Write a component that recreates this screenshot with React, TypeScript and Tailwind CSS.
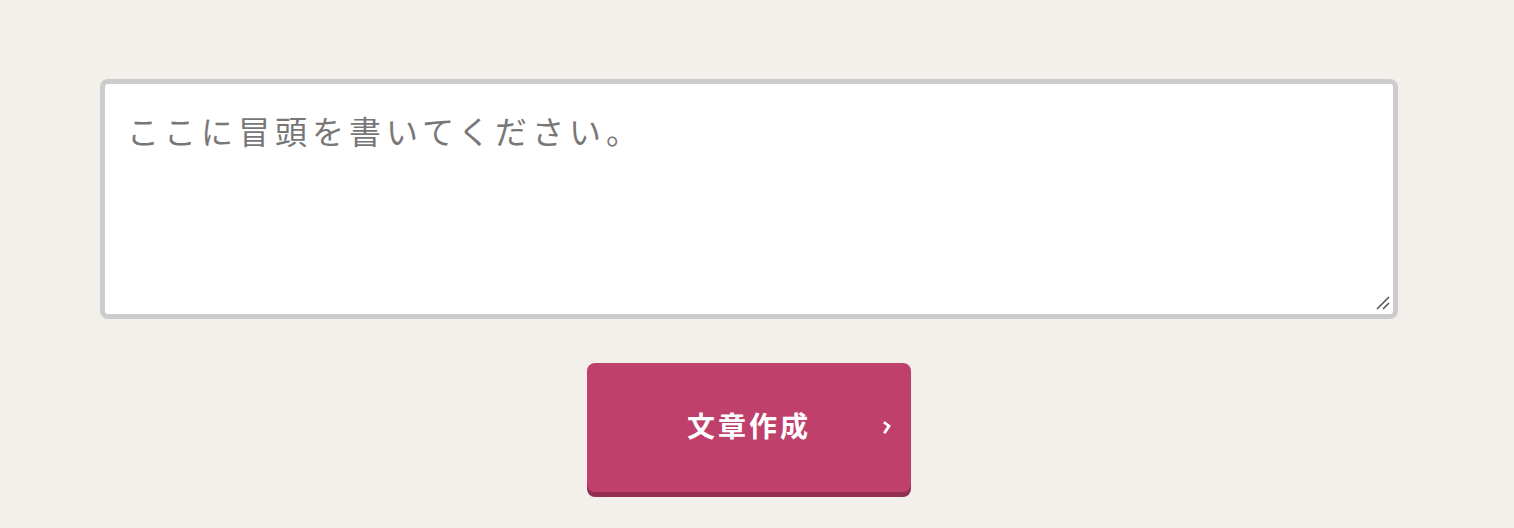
import React, { useState } from 'react';

export default function App() {
  const [text, setText] = useState('');

  return (
    <div className="min-h-[528px] w-full bg-[#f3f0eb] pt-[79px]" style={{ fontFamily: '"Noto Sans CJK JP", "Noto Sans", sans-serif' }}>
      <div className="ml-[100px] flex w-[1298px] flex-col items-center">
        <div className="relative w-full">
          <textarea
            value={text}
            onChange={(e) => setText(e.target.value)}
            placeholder="ここに冒頭を書いてください。"
            className="block h-[240px] w-full resize-none rounded-[8px] border-[5px] border-[#cccccc] bg-white px-[22px] py-[22px] text-[32px] leading-[1.5] tracking-[5px] text-[#333] outline-none placeholder:text-[#777777]"
          />
          {/* resize grip */}
          <svg className="pointer-events-none absolute bottom-[9px] right-[8px]" width="14" height="14" viewBox="0 0 14 14">
            <path d="M1 13 L13 1 M7 13 L13 7" stroke="#555" strokeWidth="1.6" />
          </svg>
        </div>

        <button
          type="button"
          className="relative mt-[44px] flex h-[129px] w-[324px] items-center justify-center rounded-[8px] bg-[#bf416b] pb-[5px] shadow-[0_5px_0_#922f52]"
        >
          <span className="text-[28px] font-bold tracking-[3px] text-white">文章作成</span>
          <svg className="absolute right-[18px] top-1/2 -translate-y-1/2" width="10" height="14" viewBox="0 0 10 14">
            <path d="M2 2 L6 5 L2 11" fill="none" stroke="white" strokeWidth="2.8" strokeLinecap="square" />
          </svg>
        </button>
      </div>
    </div>
  );
}
